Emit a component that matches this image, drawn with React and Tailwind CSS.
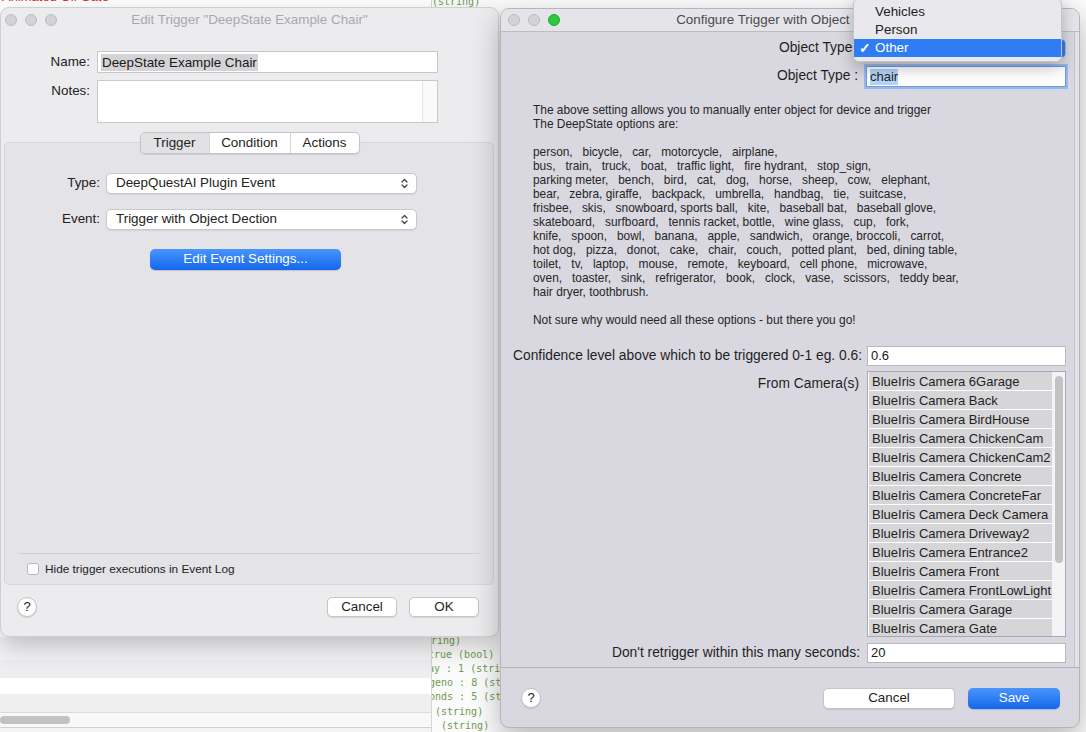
import React from "react";

const UpDown = ({ className = "" }) => (
  <svg width="7" height="11" viewBox="0 0 7 11" className={className} fill="none" stroke="currentColor" strokeWidth="1.3" strokeLinecap="round" strokeLinejoin="round">
    <path d="M1 4 L3.5 1.5 L6 4" />
    <path d="M1 7 L3.5 9.5 L6 7" />
  </svg>
);

const Light = ({ color = "bg-[#d3d3d6] border-[#bdbdc0]" }) => (
  <div className={`w-[12px] h-[12px] rounded-full border ${color}`} />
);

const paragraph = [
  "The above setting allows you to manually enter object for device and trigger",
  "The DeepState options are:",
  " ",
  "person,   bicycle,   car,   motorcycle,   airplane,",
  "bus,   train,   truck,   boat,   traffic light,   fire hydrant,   stop_sign,",
  "parking meter,   bench,   bird,   cat,   dog,   horse,   sheep,   cow,   elephant,",
  "bear,   zebra, giraffe,   backpack,   umbrella,   handbag,   tie,   suitcase,",
  "frisbee,   skis,   snowboard, sports ball,   kite,   baseball bat,   baseball glove,",
  "skateboard,   surfboard,   tennis racket, bottle,   wine glass,   cup,   fork,",
  "knife,   spoon,   bowl,   banana,   apple,   sandwich,   orange, broccoli,   carrot,",
  "hot dog,   pizza,   donot,   cake,   chair,   couch,   potted plant,   bed, dining table,",
  "toilet,   tv,   laptop,   mouse,   remote,   keyboard,   cell phone,   microwave,",
  "oven,   toaster,   sink,   refrigerator,   book,   clock,   vase,   scissors,   teddy bear,",
  "hair dryer, toothbrush.",
  " ",
  "Not sure why would need all these options - but there you go!",
];

const cameras = [
  "BlueIris Camera 6Garage",
  "BlueIris Camera Back",
  "BlueIris Camera BirdHouse",
  "BlueIris Camera ChickenCam",
  "BlueIris Camera ChickenCam2",
  "BlueIris Camera Concrete",
  "BlueIris Camera ConcreteFar",
  "BlueIris Camera Deck Camera",
  "BlueIris Camera Driveway2",
  "BlueIris Camera Entrance2",
  "BlueIris Camera Front",
  "BlueIris Camera FrontLowLight",
  "BlueIris Camera Garage",
  "BlueIris Camera Gate",
];

function Background() {
  return (
    <div className="flex h-full">
      <div className="w-[432px] flex flex-col border-r border-[#d6d6d6]">
        <div className="-mt-[11px] pl-[2px] text-[13px] leading-[16px] text-[#e3261c]">Animated Gif Gate</div>
        <div className="flex-1" />
        <div className="h-[23px] bg-[#f4f4f6]" />
        <div className="h-[18px] bg-[#eeeef0]" />
        <div className="h-[16px] bg-white" />
        <div className="h-[18px] bg-[#efeff1]" />
        <div className="h-[15px] border-t border-[#dcdcdc] bg-[#f8f8f8] flex items-center">
          <div className="w-[70px] h-[8px] rounded-full bg-[#c2c2c2]" />
        </div>
        <div className="h-[5px] border-t border-[#d0d0d0] bg-[#f3f3f3]" />
      </div>
      <div className="flex-1 flex flex-col overflow-hidden bg-[#fbfbfb] font-['DejaVu_Sans_Mono',monospace] text-[10px] leading-[14.2px] text-[#6f9a4f] whitespace-pre">
        <div className="-mt-[5px] ml-[0px]">(string)</div>
        <div className="flex-1" />
        <div className="ml-[-13px]">string)</div>
        <div className="ml-[-4px]">true (bool)</div>
        <div className="ml-[-10px]">day : 1 (string)</div>
        <div className="ml-[-3px]">geno : 8 (string)</div>
        <div className="ml-[-3px]">onds : 5 (string)</div>
        <div className="ml-[3px]">(string)</div>
        <div className="ml-[9px] -mb-[1px]">(string)</div>
      </div>
    </div>
  );
}

function Popup({ text }) {
  return (
    <div className="w-[311px] h-[21px] bg-white border border-[#c9c9cc] rounded-[5px] shadow-[0_1px_1px_rgba(0,0,0,0.08)] flex items-center pl-[9px] pr-[8px] text-[13.4px] text-[#222]">
      <span className="flex-1">{text}</span>
      <UpDown className="text-[#444]" />
    </div>
  );
}

function Btn({ children, className = "" }) {
  return (
    <div className={`h-[20px] bg-white border border-[#c6c6c9] rounded-[5px] shadow-[0_1px_1px_rgba(0,0,0,0.1)] flex items-center justify-center text-[13.4px] text-[#1e1e1e] ${className}`}>
      {children}
    </div>
  );
}

function Help({ className = "" }) {
  return (
    <div className={`w-[20px] h-[20px] rounded-full bg-white border border-[#c2c2c5] shadow-[0_1px_1px_rgba(0,0,0,0.12)] flex items-center justify-center text-[13px] text-[#222] ${className}`}>
      ?
    </div>
  );
}

function LeftWindow() {
  return (
    <div className="absolute left-0 top-[7px] w-[499px] h-[630px] rounded-[9px] bg-[#ecebee] border border-[#cfcfd2] shadow-[0_10px_26px_rgba(0,0,0,0.22)] flex flex-col">
      <div className="relative h-[25px] flex items-center justify-center shrink-0">
        <div className="absolute left-[4px] top-[6px] flex gap-[8px]">
          <Light />
          <Light />
          <Light />
        </div>
        <div className="text-[13.4px] text-[#a9a9ac]">Edit Trigger "DeepState Example Chair"</div>
      </div>
      <div className="pt-[18px] flex flex-col flex-1">
        <div className="flex items-center h-[22px]">
          <div className="w-[89px] text-right text-[13.4px] text-[#222]">Name:</div>
          <div className="ml-[7px] w-[341px] h-[22px] bg-white border border-[#c8c8cb] flex items-center pl-[3px]">
            <span className="bg-[#d4d4d6] text-[13.4px] text-[#1a1a1a] leading-[17px] px-[1px]">DeepState Example Chair</span>
          </div>
        </div>
        <div className="flex mt-[7px]">
          <div className="w-[89px] text-right text-[13.4px] text-[#222] pt-[1px]">Notes:</div>
          <div className="ml-[7px] w-[341px] h-[43px] bg-white border border-[#c8c8cb] flex justify-end">
            <div className="w-[15px] h-full border-l border-[#e4e4e6] bg-[#fafafa]" />
          </div>
        </div>
        <div className="relative z-10 mt-[9px] flex justify-center">
          <div className="flex h-[22px] bg-white border border-[#c4c4c7] rounded-[5px] shadow-[0_1px_1px_rgba(0,0,0,0.1)] text-[13.4px] text-[#1e1e1e] overflow-hidden">
            <div className="w-[68px] flex items-center justify-center bg-[#e2e2e5]">Trigger</div>
            <div className="w-[81px] flex items-center justify-center border-l border-[#d6d6d9]">Condition</div>
            <div className="w-[69px] flex items-center justify-center border-l border-[#d6d6d9]">Actions</div>
          </div>
        </div>
        <div className="-mt-[12px] ml-[3px] w-[490px] h-[443px] rounded-[5px] bg-[#e4e3e7] border border-[#d7d6da] flex flex-col">
          <div className="mt-[30px] flex items-center">
            <div className="w-[95px] text-right text-[13.4px] text-[#222]">Type:</div>
            <div className="ml-[6px]"><Popup text="DeepQuestAI Plugin Event" /></div>
          </div>
          <div className="mt-[15px] flex items-center">
            <div className="w-[95px] text-right text-[13.4px] text-[#222]">Event:</div>
            <div className="ml-[6px]"><Popup text="Trigger with Object Dection" /></div>
          </div>
          <div className="mt-[19px] ml-[145px] w-[191px] h-[21px] rounded-[5px] bg-[linear-gradient(#4a95fc,#1467ec)] shadow-[0_1px_1px_rgba(0,0,0,0.15)] flex items-center justify-center text-[13.4px] text-white">
            Edit Event Settings...
          </div>
          <div className="flex-1" />
          <div className="mx-[14px] border-t border-[#d0cfd3]" />
          <div className="mt-[8px] mb-[8px] h-[14px] flex items-center pl-[22px]">
            <div className="w-[12px] h-[12px] rounded-[3px] bg-white border border-[#b7b7ba]" />
            <div className="ml-[6px] text-[11.8px] leading-[14px] text-[#222]">Hide trigger executions in Event Log</div>
          </div>
        </div>
        <div className="mt-[12px] flex items-center pl-[16px] pr-[19px]">
          <Help className="-mt-[1px]" />
          <div className="flex-1" />
          <Btn className="w-[70px]">Cancel</Btn>
          <Btn className="w-[70px] ml-[12px]">OK</Btn>
        </div>
      </div>
    </div>
  );
}

function Field({ children, className = "" }) {
  return (
    <div className={`w-[199px] h-[20px] bg-white border border-[#b9b8be] flex items-center pl-[3px] text-[13px] text-[#1a1a1a] ${className}`}>
      {children}
    </div>
  );
}

function RightWindow() {
  return (
    <div className="absolute left-[500px] top-[8px] w-[580px] h-[720px] rounded-[9px] bg-[#d9d7df] border border-[#b6b5bb] shadow-[0_10px_28px_rgba(0,0,0,0.28)] flex flex-col overflow-hidden">
      <div className="relative h-[23px] shrink-0 bg-[#e5e4e9] border-b border-[#bdbcc2] flex items-center justify-center">
        <div className="absolute left-[7px] top-[5px] flex gap-[8px]">
          <Light />
          <Light />
          <Light color="bg-[#2bc840] border-[#1ea92f]" />
        </div>
        <div className="ml-[6px] text-[13.4px] text-[#4b4b4e]">Configure Trigger with Object Detection</div>
      </div>
      <div className="h-[636px] shrink-0 flex border-b border-[#b3b2b8]">
        <div className="w-[574px] flex flex-col border-r border-[#c4c3c9] text-[13.8px] text-[#1f1f1f]">
          <div className="mt-[7px] flex items-center h-[19px]">
            <div className="w-[359px] text-right">Object Type :</div>
            <div className="ml-[7px] w-[199px] h-[19px] bg-white border border-[#b9b8be] rounded-[4px] flex justify-end overflow-hidden">
              <div className="w-[16px] h-full bg-[#2f7cf3] flex items-center justify-center">
                <UpDown className="text-white" />
              </div>
            </div>
          </div>
          <div className="mt-[8px] flex items-center h-[21px]">
            <div className="w-[357px] text-right">Object Type :</div>
            <div className="ml-[8px] w-[200px] h-[21px] bg-white border border-[#6e9be0] ring-2 ring-[#97b9ee] flex items-center pl-[3px] text-[13px]">
              <span className="bg-[#b5d2f8] leading-[16px]">chair</span>
            </div>
          </div>
          <div className="mt-[16px] pl-[32px] text-[11.9px] leading-[14px] text-[#262626] whitespace-pre">
            {paragraph.map((l, i) => (
              <div key={i} className="h-[14px]">{l}</div>
            ))}
          </div>
          <div className="mt-[19px] flex items-center h-[20px]">
            <div className="w-[361px] text-right whitespace-nowrap">Confidence level above which to be triggered 0-1 eg. 0.6:</div>
            <div className="ml-[5px]"><Field>0.6</Field></div>
          </div>
          <div className="mt-[5px] flex">
            <div className="w-[358px] text-right pt-[3px]">From Camera(s)</div>
            <div className="ml-[8px] w-[199px] h-[266px] bg-[#f4f4f6] border border-[#a9a8ae] flex overflow-hidden text-[13px]">
              <div className="w-[184px] flex flex-col border-l border-white">
                {cameras.map((c) => (
                  <div key={c} className="h-[19px] shrink-0 bg-[#d6d6d8] border-b border-white pl-[3px] pt-[2px] flex items-center whitespace-nowrap overflow-hidden">
                    {c}
                  </div>
                ))}
              </div>
              <div className="flex-1 flex justify-center pt-[4px]">
                <div className="w-[8px] h-[187px] rounded-full bg-[#c3c3c6]" />
              </div>
            </div>
          </div>
          <div className="mt-[6px] flex items-center h-[20px]">
            <div className="w-[359px] text-right">Don't retrigger within this many seconds:</div>
            <div className="ml-[7px]"><Field>20</Field></div>
          </div>
        </div>
        <div className="flex-1 bg-[#e3e2e7]" />
      </div>
      <div className="flex-1 flex items-center pl-[20px] pr-[19px] pt-[1px]">
        <Help />
        <div className="flex-1" />
        <Btn className="w-[132px] h-[21px]">Cancel</Btn>
        <div className="ml-[13px] w-[92px] h-[21px] rounded-[5px] bg-[linear-gradient(#4a95fc,#1467ec)] shadow-[0_1px_1px_rgba(0,0,0,0.15)] flex items-center justify-center text-[13.4px] text-white">
          Save
        </div>
      </div>
    </div>
  );
}

function Menu() {
  return (
    <div className="absolute left-[853px] top-[-2px] w-[209px] pt-[4px] pb-[4px] rounded-[6px] bg-[#e9e8ec] border border-[#c6c5ca] shadow-[0_6px_16px_rgba(0,0,0,0.25)] text-[13.4px] text-[#222]">
      <div className="h-[18px] flex items-center pl-[21px]">Vehicles</div>
      <div className="h-[18px] flex items-center pl-[21px]">Person</div>
      <div className="h-[18px] flex items-center bg-[#2f7cf3] text-white">
        <span className="w-[21px] pl-[5px] text-[14px] font-bold">✓</span>
        <span>Other</span>
      </div>
    </div>
  );
}

export default function App() {
  return (
    <div className="relative w-[1086px] h-[732px] overflow-hidden bg-white font-['Liberation_Sans',Arial,sans-serif]">
      <Background />
      <LeftWindow />
      <RightWindow />
      <Menu />
    </div>
  );
}
